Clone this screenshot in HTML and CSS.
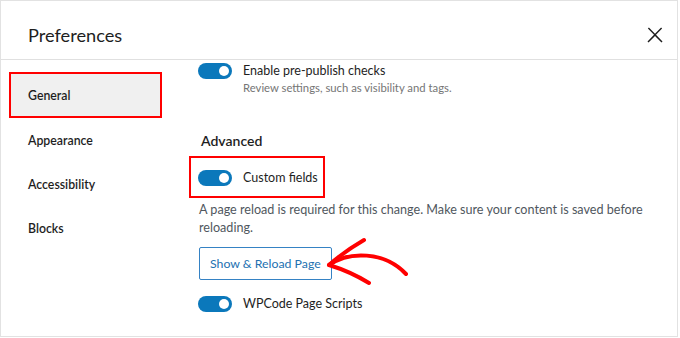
FILE: index.html
```html
<!DOCTYPE html>
<html lang="en">
<head>
    <meta charset="UTF-8">
    <title>Preferences</title>
    <link rel="stylesheet" href="styles.css">
</head>
<body>
    <div class="modal">
        <div class="modal-header">
            <h1 class="modal-title">Preferences</h1>
            <button class="close-btn" aria-label="Close">
                <svg viewBox="0 0 24 24" width="24" height="24"><path d="M13 11.8l6.1-6.3-1-1-6.1 6.2-6.1-6.2-1 1 6.1 6.3-6.5 6.7 1 1 6.5-6.6 6.5 6.6 1-1z"/></svg>
            </button>
        </div>
        <div class="modal-body">
            <ul class="tabs">
                <li class="tab active">General</li>
                <li class="tab">Appearance</li>
                <li class="tab">Accessibility</li>
                <li class="tab">Blocks</li>
            </ul>
            <div class="panel">
                <div class="option">
                    <span class="toggle"></span>
                    <span class="option-label">Enable pre-publish checks</span>
                </div>
                <p class="option-help">Review settings, such as visibility and tags.</p>

                <h2 class="section-title">Advanced</h2>

                <div class="highlight">
                    <div class="option">
                        <span class="toggle"></span>
                        <span class="option-label">Custom fields</span>
                    </div>
                </div>
                <p class="notice">A page reload is required for this change. Make sure your content is saved before reloading.</p>
                <button class="reload-btn">Show &amp; Reload Page</button>

                <div class="option option-last">
                    <span class="toggle"></span>
                    <span class="option-label">WPCode Page Scripts</span>
                </div>

                <!-- annotation arrow -->
                <svg class="arrow" viewBox="0 0 90 56" width="90" height="56">
                    <path d="M40 7 C 28 14, 14 24, 5 32 C 18 36, 32 42, 45 50" />
                    <path d="M5 32 C 25 18, 60 18, 82 41" />
                </svg>
            </div>
        </div>
    </div>
</body>
</html>
```

FILE: styles.css
```css
html, body {
    margin: 0;
    padding: 0;
    background: #fff;
}

body {
    font-family: Lato, "Open Sans", sans-serif;
    color: #1e1e1e;
}

.modal {
    width: 678px;
    height: 337px;
    border: 1px solid #e2e2e2;
    box-sizing: border-box;
    overflow: hidden;
}

.modal-header {
    border-bottom: 1px solid #e0e0e0;
    display: flex;
    align-items: center;
    justify-content: space-between;
    padding: 10px 0 0 27px;
    height: 48px;
}

.modal-title {
    margin: 0;
    font-size: 18.2px;
    font-weight: 400;
    line-height: 24px;
}

.close-btn {
    border: 0;
    background: none;
    padding: 0;
    margin-right: 10px;
    width: 24px;
    height: 24px;
    fill: #1e1e1e;
}

.modal-body {
    display: flex;
}

.tabs {
    list-style: none;
    margin: 0;
    padding: 12px 0 0 8px;
    width: 189px;
}

.tab {
    width: 153px;
    height: 44px;
    box-sizing: border-box;
    padding-left: 19px;
    display: flex;
    align-items: center;
    font-size: 12.3px;
    font-weight: 600;
}

.tab.active {
    background: #f0f0f0;
    border: 2px solid #f00;
    padding-left: 17px;
    height: 46px;
}

.panel {
    position: relative;
    flex: 1;
    padding-top: 3px;
}

.option {
    display: flex;
    align-items: center;
    gap: 11px;
    height: 16px;
}

.toggle {
    position: relative;
    width: 34px;
    height: 16px;
    border-radius: 8px;
    background: #0b78bb;
    flex: none;
}

.toggle::after {
    content: "";
    position: absolute;
    right: 3px;
    top: 3px;
    width: 10px;
    height: 10px;
    border-radius: 50%;
    background: #fff;
}

.option-label {
    font-size: 12.5px;
    line-height: 16px;
    color: #1e1e1e;
}

.option-help {
    margin: 1px 0 0 45px;
    font-size: 11.3px;
    line-height: 16px;
    color: #757575;
}

.section-title {
    margin: 35px 0 5px 3px;
    font-size: 14px;
    font-weight: 600;
    line-height: 20px;
}

.highlight {
    width: fit-content;
    margin-left: -9px;
    border: 2px solid #f00;
    padding: 12px 5px 10px 7px;
}

.notice {
    margin: 3px 0 0 1px;
    max-width: 460px;
    font-size: 12.6px;
    line-height: 18px;
    color: #50575e;
}

.reload-btn {
    display: block;
    margin: 10px 0 0 1px;
    height: 33px;
    border: 1px solid #3582c4;
    border-radius: 2px;
    background: #fff;
    color: #2271b1;
    font-family: inherit;
    font-size: 12.3px;
    padding: 0 10px;
}

.option-last {
    margin-top: 16px;
}

.arrow {
    position: absolute;
    left: 126px;
    top: 173px;
    fill: none;
    stroke: #f00;
    stroke-width: 4;
    stroke-linecap: round;
    stroke-linejoin: round;
}
```
